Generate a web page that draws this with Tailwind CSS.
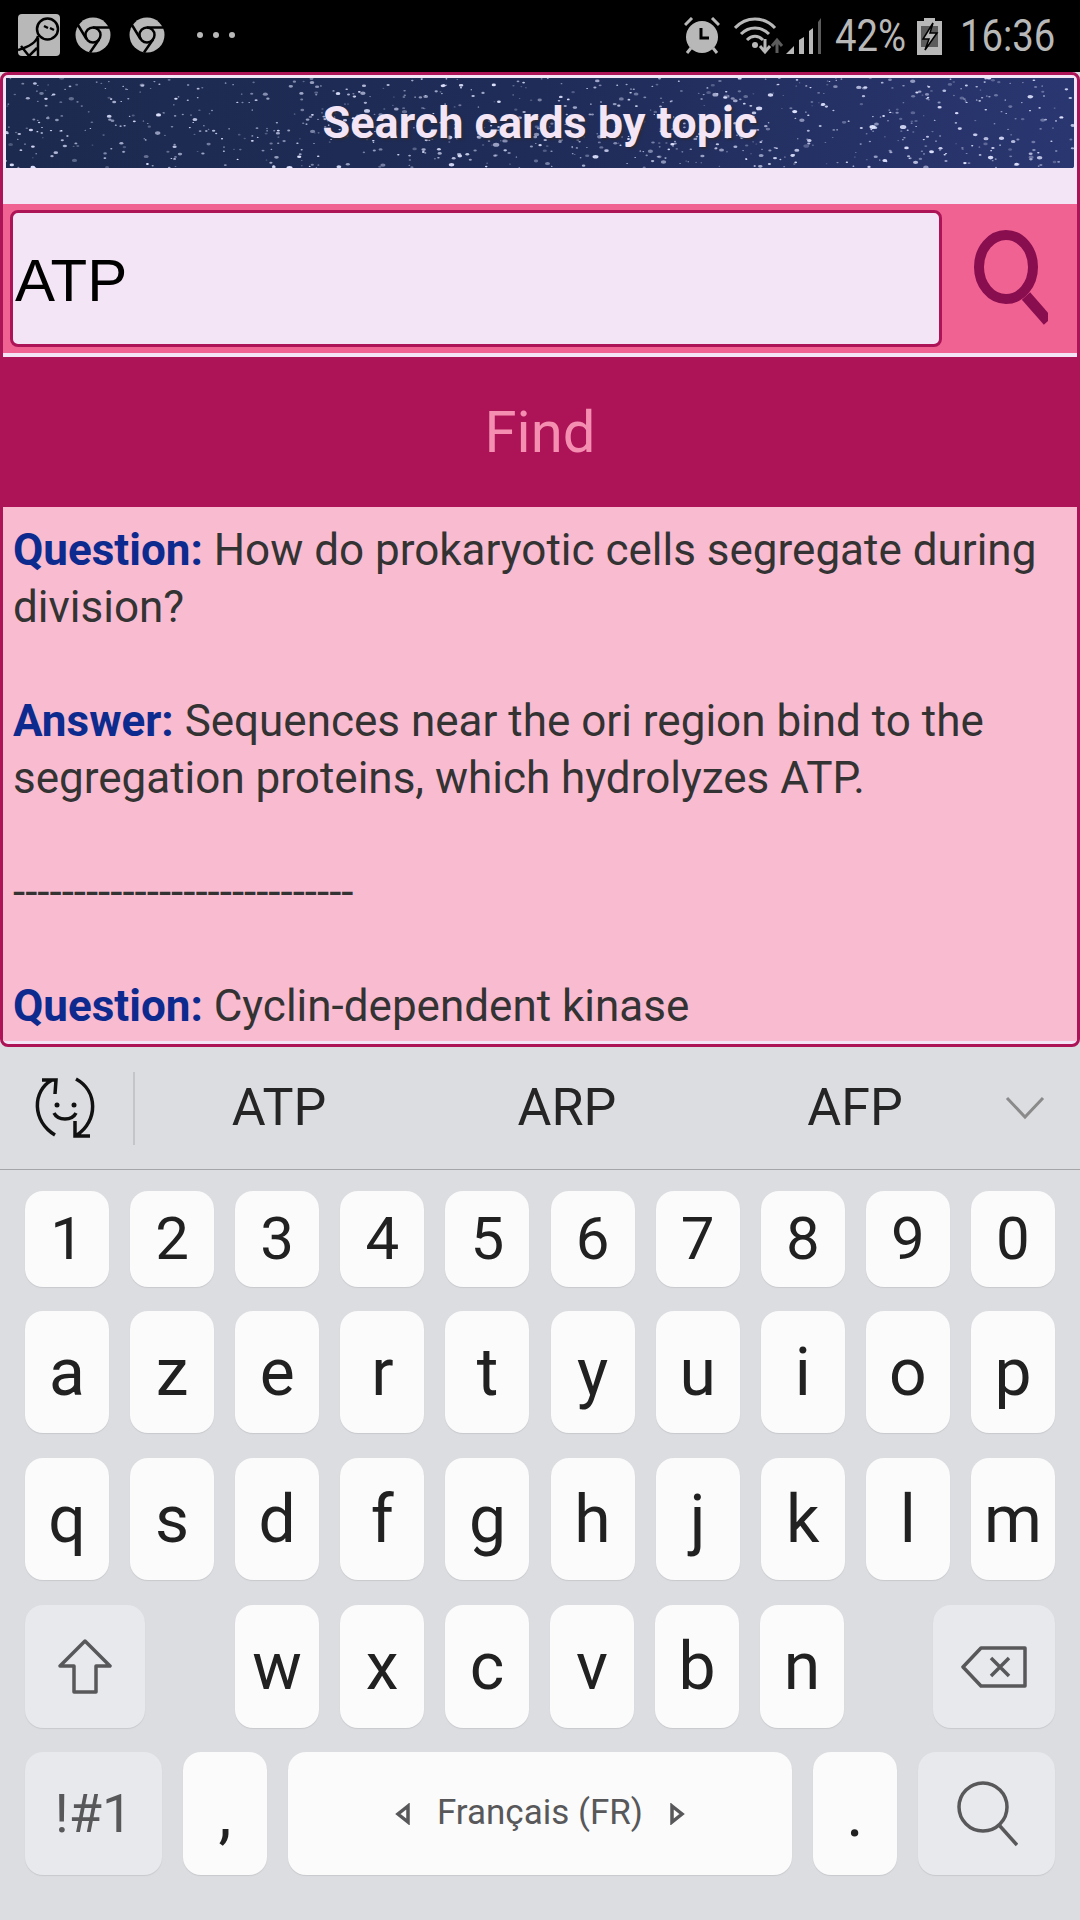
<!DOCTYPE html>
<html lang="en">
<head>
  <meta charset="UTF-8">
  <meta name="viewport" content="width=device-width, initial-scale=1">
  <title>Search cards by topic</title>
  <script src="https://cdn.jsdelivr.net/npm/@tailwindcss/browser@4"></script>
</head>
<body class="w-[1080px] h-[1920px] overflow-hidden bg-[#dcdde1] [font-family:Roboto,sans-serif]">

  <!-- status bar -->
  <div class="h-[72px] bg-black flex items-center text-[#b8b8b8]">
    <svg class="ml-[18px] mt-[-2px]" width="42" height="42" viewBox="0 0 42 42">
      <rect width="42" height="42" rx="4" fill="#b8b8b8"/>
      <circle cx="29.500" cy="15" r="10.500" fill="#b8b8b8" stroke="#000" stroke-width="2.500"/>
      <path d="M20 22 C18 30 7 34 0 36 M20 24 V42 M3 32 L11 42 L19 34 M26 12 l4 2 M32 14 l4 2" fill="none" stroke="#000" stroke-width="2.500"/>
    </svg>
    <svg class="ml-[15px] mt-[-2px]" width="36" height="36" viewBox="0 0 36 36">
      <circle cx="18" cy="18" r="17.500" fill="#b8b8b8"/>
      <circle cx="18" cy="18" r="7.500" fill="none" stroke="#000" stroke-width="2.500"/>
      <path d="M18 10.500 H35 M11.500 22 L3 8 M24 22.500 L15 35.500" stroke="#000" stroke-width="2.500"/>
    </svg>
    <svg class="ml-[18px] mt-[-2px]" width="36" height="36" viewBox="0 0 36 36">
      <circle cx="18" cy="18" r="17.500" fill="#b8b8b8"/>
      <circle cx="18" cy="18" r="7.500" fill="none" stroke="#000" stroke-width="2.500"/>
      <path d="M18 10.500 H35 M11.500 22 L3 8 M24 22.500 L15 35.500" stroke="#000" stroke-width="2.500"/>
    </svg>
    <div class="ml-[32px] mt-[-2px] flex gap-[10px]">
      <span class="w-[6px] h-[6px] rounded-full bg-[#b8b8b8]"></span>
      <span class="w-[6px] h-[6px] rounded-full bg-[#b8b8b8]"></span>
      <span class="w-[6px] h-[6px] rounded-full bg-[#b8b8b8]"></span>
    </div>

    <svg class="ml-auto" width="36" height="38" viewBox="0 0 36 38">
      <path d="M1 8 L8 1 M35 8 L28 1 M7 31 L3 36 M29 31 L33 36" stroke="#b8b8b8" stroke-width="3"/>
      <circle cx="18" cy="20" r="16" fill="#b8b8b8"/>
      <path d="M17 11 V21 H25" fill="none" stroke="#000" stroke-width="3"/>
    </svg>
    <svg class="ml-[14px]" width="50" height="38" viewBox="0 0 50 38">
      <path d="M1 11 C12 -1 30 -1 41 11 M7 17 C15 9 27 9 35 17 M13 23 C18 18 24 18 29 23" fill="none" stroke="#b8b8b8" stroke-width="3"/>
      <circle cx="21" cy="28" r="3" fill="#b8b8b8"/>
      <path d="M31 22 V33 M26 29 L31 35 L36 29" fill="none" stroke="#b8b8b8" stroke-width="3"/>
      <path d="M43 36 V24 M38 29 L43 23 L48 29" fill="none" stroke="#5c5c5c" stroke-width="3"/>
    </svg>
    <svg class="ml-[2px]" width="36" height="38" viewBox="0 0 36 38">
      <path d="M0 37 L8 29 V37 Z" fill="#b8b8b8"/>
      <path d="M13 37 V23 L18 20 V37 Z" fill="#b8b8b8"/>
      <path d="M23 37 V14 L27 11 V37 Z" fill="#b8b8b8"/>
      <path d="M32 37 V5 L35 1 V37 Z" fill="#5c5c5c"/>
    </svg>
    <div class="ml-[13px] w-[70px] text-[44px] leading-none"><span class="inline-block origin-left scale-x-[0.87]">42%</span></div>
    <svg class="ml-[12px]" width="25" height="37" viewBox="0 0 25 37">
      <path d="M7 0 H18 V3 H25 V37 H0 V3 H7 Z" fill="#b8b8b8"/>
      <rect x="4" y="8" width="17" height="21" fill="#5c5c5c"/>
      <path d="M16 5 L6 21 H12 L8 32 L20 15 H13 Z" fill="#b8b8b8" stroke="#000" stroke-width="1.500"/>
    </svg>
    <div class="ml-[18px] w-[120px] shrink-0 text-[44px] leading-none"><span class="inline-block origin-left scale-x-[0.87]">16:36</span></div>
  </div>

  <!-- card -->
  <div class="h-[975px] border-[3px] border-[#ad1457] rounded-[8px] bg-[#f3e5f5] overflow-hidden flex flex-col">
    <div class="relative h-[90px] mx-[3px] mt-[3px] shrink-0 overflow-hidden bg-gradient-to-r from-[#1c2a4f] via-[#1f2c58] to-[#2a3670] flex items-center justify-center">
      <svg id="stars" class="absolute inset-0" width="1068" height="90" viewBox="0 0 1068 90"></svg>
      <h1 class="relative text-[45px] font-bold text-[#f3e5f5] [text-shadow:2px_2px_2px_#2b2b3a]">Search cards by topic</h1>
    </div>
    <div class="h-[36px] shrink-0"></div>

    <div class="h-[149px] shrink-0 bg-[#f06292] flex">
      <input type="text" value="ATP" class="ml-[7px] mt-[6px] w-[932px] h-[137px] px-[2px] pt-[3px] border-[3px] border-[#ad1457] rounded-[8px] bg-[#f3e5f5] text-black text-[60px] [font-family:'Liberation_Sans',sans-serif] outline-none">
      <div class="flex-1 flex items-center justify-center">
        <svg width="76" height="110" viewBox="0 0 76 110">
          <ellipse cx="34" cy="43" rx="27" ry="32" fill="none" stroke="#880e4f" stroke-width="10"/>
          <path d="M54 72 L76 97" stroke="#880e4f" stroke-width="11"/>
        </svg>
      </div>
    </div>
    <div class="h-[4px] shrink-0"></div>

    <button class="h-[150px] shrink-0 bg-[#ad1457] text-[#f48fb1] text-[58px]">Find</button>

    <div class="h-[534px] shrink-0 overflow-hidden bg-[#f8bbd0] px-[10px] pt-[15px] text-[44px] leading-[57px] text-[#333333]">
      <b class="text-[#0d2a8f]">Question:</b> How do prokaryotic cells segregate during division?<br><br>
      <b class="text-[#0d2a8f]">Answer:</b> Sequences near the ori region bind to the segregation proteins, which hydrolyzes ATP.<br><br>
      ----------------------------<br><br>
      <b class="text-[#0d2a8f]">Question:</b> Cyclin-dependent kinase
    </div>
  </div>

  <!-- keyboard -->
  <div class="h-[123px] flex items-center border-b border-[#a5a5a8]">
    <svg class="ml-[34px] shrink-0" width="66" height="66" viewBox="0 0 66 66">
      <path d="M18 5 C-2 16 -2 46 21 60 M8 5 H22 L21 19" fill="none" stroke="#111" stroke-width="3.500"/>
      <path d="M42 4 C64 16 64 46 43 60 M41 46 L41 61 H56" fill="none" stroke="#111" stroke-width="3.500"/>
      <circle cx="23" cy="30" r="2.500" fill="#111"/>
      <circle cx="40" cy="30" r="2.500" fill="#111"/>
      <path d="M20 38 C24 46 38 46 42 38" fill="none" stroke="#111" stroke-width="3.500"/>
    </svg>
    <div class="ml-[33px] w-[2px] h-[73px] bg-[#c4c5c9] shrink-0"></div>
    <div class="w-[144px] ml-[72px] text-center text-[52px] text-[#252525]">ATP</div>
    <div class="w-[144px] ml-[144px] text-center text-[52px] text-[#252525]">ARP</div>
    <div class="w-[144px] ml-[144px] text-center text-[52px] text-[#252525]">AFP</div>
    <svg class="ml-[78px] shrink-0" width="40" height="24" viewBox="0 0 40 24">
      <path d="M2 2 L20 21 L38 2" fill="none" stroke="#8a8a8a" stroke-width="3"/>
    </svg>
  </div>

  <div class="pt-[21px] px-[25px] flex flex-col gap-[24px] text-[#212121]">
    <div class="flex justify-between text-[60px]">
      <div class="w-[84px] h-[96px] rounded-[18px] bg-[#fbfbfb] shadow-[0_1px_1px_#c8c9cd] flex items-center justify-center">1</div>
      <div class="w-[84px] h-[96px] rounded-[18px] bg-[#fbfbfb] shadow-[0_1px_1px_#c8c9cd] flex items-center justify-center">2</div>
      <div class="w-[84px] h-[96px] rounded-[18px] bg-[#fbfbfb] shadow-[0_1px_1px_#c8c9cd] flex items-center justify-center">3</div>
      <div class="w-[84px] h-[96px] rounded-[18px] bg-[#fbfbfb] shadow-[0_1px_1px_#c8c9cd] flex items-center justify-center">4</div>
      <div class="w-[84px] h-[96px] rounded-[18px] bg-[#fbfbfb] shadow-[0_1px_1px_#c8c9cd] flex items-center justify-center">5</div>
      <div class="w-[84px] h-[96px] rounded-[18px] bg-[#fbfbfb] shadow-[0_1px_1px_#c8c9cd] flex items-center justify-center">6</div>
      <div class="w-[84px] h-[96px] rounded-[18px] bg-[#fbfbfb] shadow-[0_1px_1px_#c8c9cd] flex items-center justify-center">7</div>
      <div class="w-[84px] h-[96px] rounded-[18px] bg-[#fbfbfb] shadow-[0_1px_1px_#c8c9cd] flex items-center justify-center">8</div>
      <div class="w-[84px] h-[96px] rounded-[18px] bg-[#fbfbfb] shadow-[0_1px_1px_#c8c9cd] flex items-center justify-center">9</div>
      <div class="w-[84px] h-[96px] rounded-[18px] bg-[#fbfbfb] shadow-[0_1px_1px_#c8c9cd] flex items-center justify-center">0</div>
    </div>
    <div class="flex justify-between text-[66px]">
      <div class="w-[84px] h-[122px] rounded-[18px] bg-[#fbfbfb] shadow-[0_1px_1px_#c8c9cd] flex items-center justify-center">a</div>
      <div class="w-[84px] h-[122px] rounded-[18px] bg-[#fbfbfb] shadow-[0_1px_1px_#c8c9cd] flex items-center justify-center">z</div>
      <div class="w-[84px] h-[122px] rounded-[18px] bg-[#fbfbfb] shadow-[0_1px_1px_#c8c9cd] flex items-center justify-center">e</div>
      <div class="w-[84px] h-[122px] rounded-[18px] bg-[#fbfbfb] shadow-[0_1px_1px_#c8c9cd] flex items-center justify-center">r</div>
      <div class="w-[84px] h-[122px] rounded-[18px] bg-[#fbfbfb] shadow-[0_1px_1px_#c8c9cd] flex items-center justify-center">t</div>
      <div class="w-[84px] h-[122px] rounded-[18px] bg-[#fbfbfb] shadow-[0_1px_1px_#c8c9cd] flex items-center justify-center">y</div>
      <div class="w-[84px] h-[122px] rounded-[18px] bg-[#fbfbfb] shadow-[0_1px_1px_#c8c9cd] flex items-center justify-center">u</div>
      <div class="w-[84px] h-[122px] rounded-[18px] bg-[#fbfbfb] shadow-[0_1px_1px_#c8c9cd] flex items-center justify-center">i</div>
      <div class="w-[84px] h-[122px] rounded-[18px] bg-[#fbfbfb] shadow-[0_1px_1px_#c8c9cd] flex items-center justify-center">o</div>
      <div class="w-[84px] h-[122px] rounded-[18px] bg-[#fbfbfb] shadow-[0_1px_1px_#c8c9cd] flex items-center justify-center">p</div>
    </div>
    <div class="flex justify-between text-[66px] mt-[1px]">
      <div class="w-[84px] h-[122px] rounded-[18px] bg-[#fbfbfb] shadow-[0_1px_1px_#c8c9cd] flex items-center justify-center">q</div>
      <div class="w-[84px] h-[122px] rounded-[18px] bg-[#fbfbfb] shadow-[0_1px_1px_#c8c9cd] flex items-center justify-center">s</div>
      <div class="w-[84px] h-[122px] rounded-[18px] bg-[#fbfbfb] shadow-[0_1px_1px_#c8c9cd] flex items-center justify-center">d</div>
      <div class="w-[84px] h-[122px] rounded-[18px] bg-[#fbfbfb] shadow-[0_1px_1px_#c8c9cd] flex items-center justify-center">f</div>
      <div class="w-[84px] h-[122px] rounded-[18px] bg-[#fbfbfb] shadow-[0_1px_1px_#c8c9cd] flex items-center justify-center">g</div>
      <div class="w-[84px] h-[122px] rounded-[18px] bg-[#fbfbfb] shadow-[0_1px_1px_#c8c9cd] flex items-center justify-center">h</div>
      <div class="w-[84px] h-[122px] rounded-[18px] bg-[#fbfbfb] shadow-[0_1px_1px_#c8c9cd] flex items-center justify-center">j</div>
      <div class="w-[84px] h-[122px] rounded-[18px] bg-[#fbfbfb] shadow-[0_1px_1px_#c8c9cd] flex items-center justify-center">k</div>
      <div class="w-[84px] h-[122px] rounded-[18px] bg-[#fbfbfb] shadow-[0_1px_1px_#c8c9cd] flex items-center justify-center">l</div>
      <div class="w-[84px] h-[122px] rounded-[18px] bg-[#fbfbfb] shadow-[0_1px_1px_#c8c9cd] flex items-center justify-center">m</div>
    </div>
    <div class="flex text-[66px] mt-[1px]">
      <div class="w-[120px] h-[123px] rounded-[18px] bg-[#e8e9ed] shadow-[0_1px_1px_#c8c9cd] flex items-center justify-center">
        <svg width="54" height="55" viewBox="0 0 54 55">
          <path d="M27 2 L52 27 H38 V53 H16 V27 H2 Z" fill="none" stroke="#58585a" stroke-width="3.500" stroke-linejoin="round"/>
        </svg>
      </div>
      <div class="ml-[90px] w-[84px] h-[123px] rounded-[18px] bg-[#fbfbfb] shadow-[0_1px_1px_#c8c9cd] flex items-center justify-center">w</div>
      <div class="ml-[21px] w-[84px] h-[123px] rounded-[18px] bg-[#fbfbfb] shadow-[0_1px_1px_#c8c9cd] flex items-center justify-center">x</div>
      <div class="ml-[21px] w-[84px] h-[123px] rounded-[18px] bg-[#fbfbfb] shadow-[0_1px_1px_#c8c9cd] flex items-center justify-center">c</div>
      <div class="ml-[21px] w-[84px] h-[123px] rounded-[18px] bg-[#fbfbfb] shadow-[0_1px_1px_#c8c9cd] flex items-center justify-center">v</div>
      <div class="ml-[21px] w-[84px] h-[123px] rounded-[18px] bg-[#fbfbfb] shadow-[0_1px_1px_#c8c9cd] flex items-center justify-center">b</div>
      <div class="ml-[21px] w-[84px] h-[123px] rounded-[18px] bg-[#fbfbfb] shadow-[0_1px_1px_#c8c9cd] flex items-center justify-center">n</div>
      <div class="ml-auto w-[122px] h-[123px] rounded-[18px] bg-[#e8e9ed] shadow-[0_1px_1px_#c8c9cd] flex items-center justify-center">
        <svg width="66" height="42" viewBox="0 0 66 42">
          <path d="M20 2 H64 V40 H20 L2 21 Z" fill="none" stroke="#58585a" stroke-width="3.500" stroke-linejoin="round"/>
          <path d="M30 12 L48 30 M48 12 L30 30" stroke="#58585a" stroke-width="3.500"/>
        </svg>
      </div>
    </div>
    <div class="flex text-[66px]">
      <div class="w-[137px] h-[123px] rounded-[18px] bg-[#e8e9ed] shadow-[0_1px_1px_#c8c9cd] flex items-center justify-center text-[54px] text-[#58585a]">!#1</div>
      <div class="ml-[21px] w-[84px] h-[123px] rounded-[18px] bg-[#fbfbfb] shadow-[0_1px_1px_#c8c9cd] flex items-center justify-center">,</div>
      <div class="ml-[21px] w-[504px] h-[123px] rounded-[18px] bg-[#fbfbfb] shadow-[0_1px_1px_#c8c9cd] flex items-center justify-center text-[35px] text-[#58585a]">
        <svg width="16" height="22" viewBox="0 0 16 22"><path d="M13 3 L3 11 L13 19 Z" fill="none" stroke="#58585a" stroke-width="3.500"/></svg>
        <span class="mx-[26px]">Français (FR)</span>
        <svg width="16" height="22" viewBox="0 0 16 22"><path d="M3 3 L13 11 L3 19 Z" fill="none" stroke="#58585a" stroke-width="3.500"/></svg>
      </div>
      <div class="ml-[21px] w-[84px] h-[123px] rounded-[18px] bg-[#fbfbfb] shadow-[0_1px_1px_#c8c9cd] flex items-center justify-center">.</div>
      <div class="ml-[21px] w-[137px] h-[123px] rounded-[18px] bg-[#e8e9ed] shadow-[0_1px_1px_#c8c9cd] flex items-center justify-center">
        <svg width="62" height="66" viewBox="0 0 62 66">
          <circle cx="27" cy="26" r="24" fill="none" stroke="#58585a" stroke-width="3.500"/>
          <path d="M43 44 L61 64" stroke="#58585a" stroke-width="3.500"/>
        </svg>
      </div>
    </div>
  </div>

  <script>
    // star field behind the title, seeded so every render is the same
    const starsEl = document.getElementById('stars');
    let seed = 7;
    function rnd() {
      seed = (seed * 16807) % 2147483647;
      return seed / 2147483647;
    }
    let stars = '';
    for (let i = 0; i < 900; i++) {
      const x = rnd() * 1068;
      const y = rnd() * 90;
      const r = 0.5 + rnd() * rnd() * 1.6;
      const o = 0.25 + rnd() * 0.75;
      stars += `<ellipse cx="${x.toFixed(1)}" cy="${y.toFixed(1)}" rx="${(r * 1.6).toFixed(1)}" ry="${r.toFixed(1)}" fill="#dfe3ff" opacity="${o.toFixed(2)}"/>`;
    }
    starsEl.innerHTML = stars;
  </script>
</body>
</html>
